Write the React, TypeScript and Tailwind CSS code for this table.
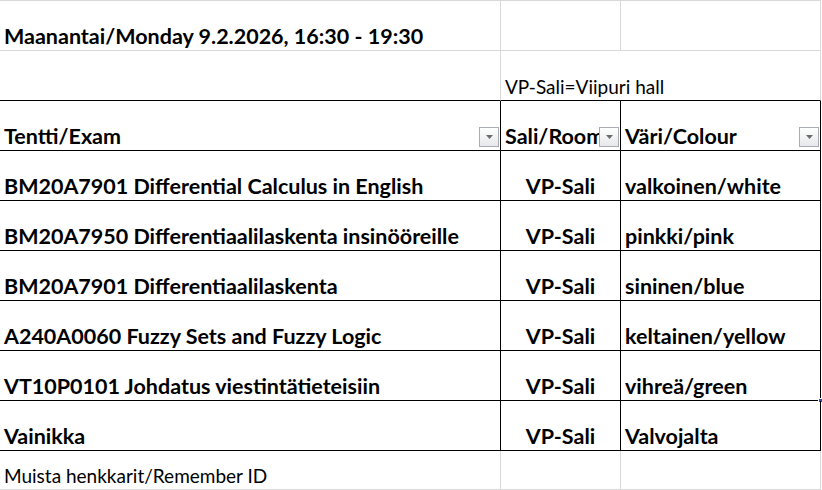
import React from 'react';

const exams: [string, string][] = [
  ['BM20A7901 Differential Calculus in English', 'valkoinen/white'],
  ['BM20A7950 Differentiaalilaskenta insinööreille', 'pinkki/pink'],
  ['BM20A7901 Differentiaalilaskenta', 'sininen/blue'],
  ['A240A0060 Fuzzy Sets and Fuzzy Logic', 'keltainen/yellow'],
  ['VT10P0101 Johdatus viestintätieteisiin', 'vihreä/green'],
  ['Vainikka', 'Valvojalta'],
];

const FilterButton: React.FC = () => (
  <div className="absolute right-[1px] top-[26px] w-[20px] h-[20px] border border-[#a9adb3] bg-gradient-to-b from-white to-[#e6e8eb] flex items-center justify-center">
    <svg width="7" height="4" viewBox="0 0 7 4">
      <path d="M0 0h7L3.5 4z" fill="#6b6b6b" />
    </svg>
  </div>
);

export default function App() {
  const cell = 'flex items-end pb-[3px] px-[4px] whitespace-nowrap overflow-hidden';
  return (
    <div className="w-[822px] h-[490px] bg-white overflow-hidden text-black font-['Lato','Liberation_Sans',sans-serif] text-[21.5px] leading-[22px]">
      <div className="grid grid-cols-[501px_120px_201px]">
        {/* row 1 */}
        <div className={`${cell} h-[51px] border-t border-b border-r border-[#d9d9d9] font-bold overflow-visible`}>
          Maanantai/Monday 9.2.2026, 16:30 - 19:30
        </div>
        <div className="h-[51px] border-t border-b border-r border-[#d9d9d9]" />
        <div className="h-[51px] border-t border-b border-r border-[#d9d9d9] mr-[1px]" />

        {/* row 2 */}
        <div className="h-[50px] border-b border-b-black border-r border-r-[#d9d9d9]" />
        <div className={`${cell} h-[50px] border-b border-black overflow-visible text-[19px] leading-[20px]`}>
          VP-Sali=Viipuri hall
        </div>
        <div className="h-[50px] border-b border-b-black border-r border-r-[#d9d9d9] mr-[1px]" />

        {/* header */}
        <div className={`${cell} relative h-[50px] border-b border-r border-black font-bold`}>
          Tentti/Exam
          <FilterButton />
        </div>
        <div className={`${cell} relative h-[50px] border-b border-r border-black font-bold`}>
          Sali/Room
          <FilterButton />
        </div>
        <div className={`${cell} relative h-[50px] border-b border-r border-black font-bold mr-[1px]`}>
          Väri/Colour
          <FilterButton />
        </div>

        {exams.map(([exam, colour], i) => (
          <React.Fragment key={exam}>
            <div className={`${cell} h-[50px] border-b border-r border-black font-bold`}>{exam}</div>
            <div className={`${cell} h-[50px] border-b border-r border-black font-bold justify-center`}>VP-Sali</div>
            <div className={`${cell} relative h-[50px] border-b border-r border-black font-bold mr-[1px] overflow-visible`}>
              {colour}
              {i === 4 && <div className="absolute right-[-3px] bottom-[-3px] w-[5px] h-[5px] bg-[#3f51b5] border border-white" />}
            </div>
          </React.Fragment>
        ))}

        {/* footer */}
        <div className={`${cell} h-[39px] border-b border-r border-[#d9d9d9] text-[19px] leading-[20px]`}>
          Muista henkkarit/Remember ID
        </div>
        <div className="h-[39px] border-b border-r border-[#d9d9d9]" />
        <div className="h-[39px] border-b border-r border-[#d9d9d9] mr-[1px]" />
      </div>
    </div>
  );
}
